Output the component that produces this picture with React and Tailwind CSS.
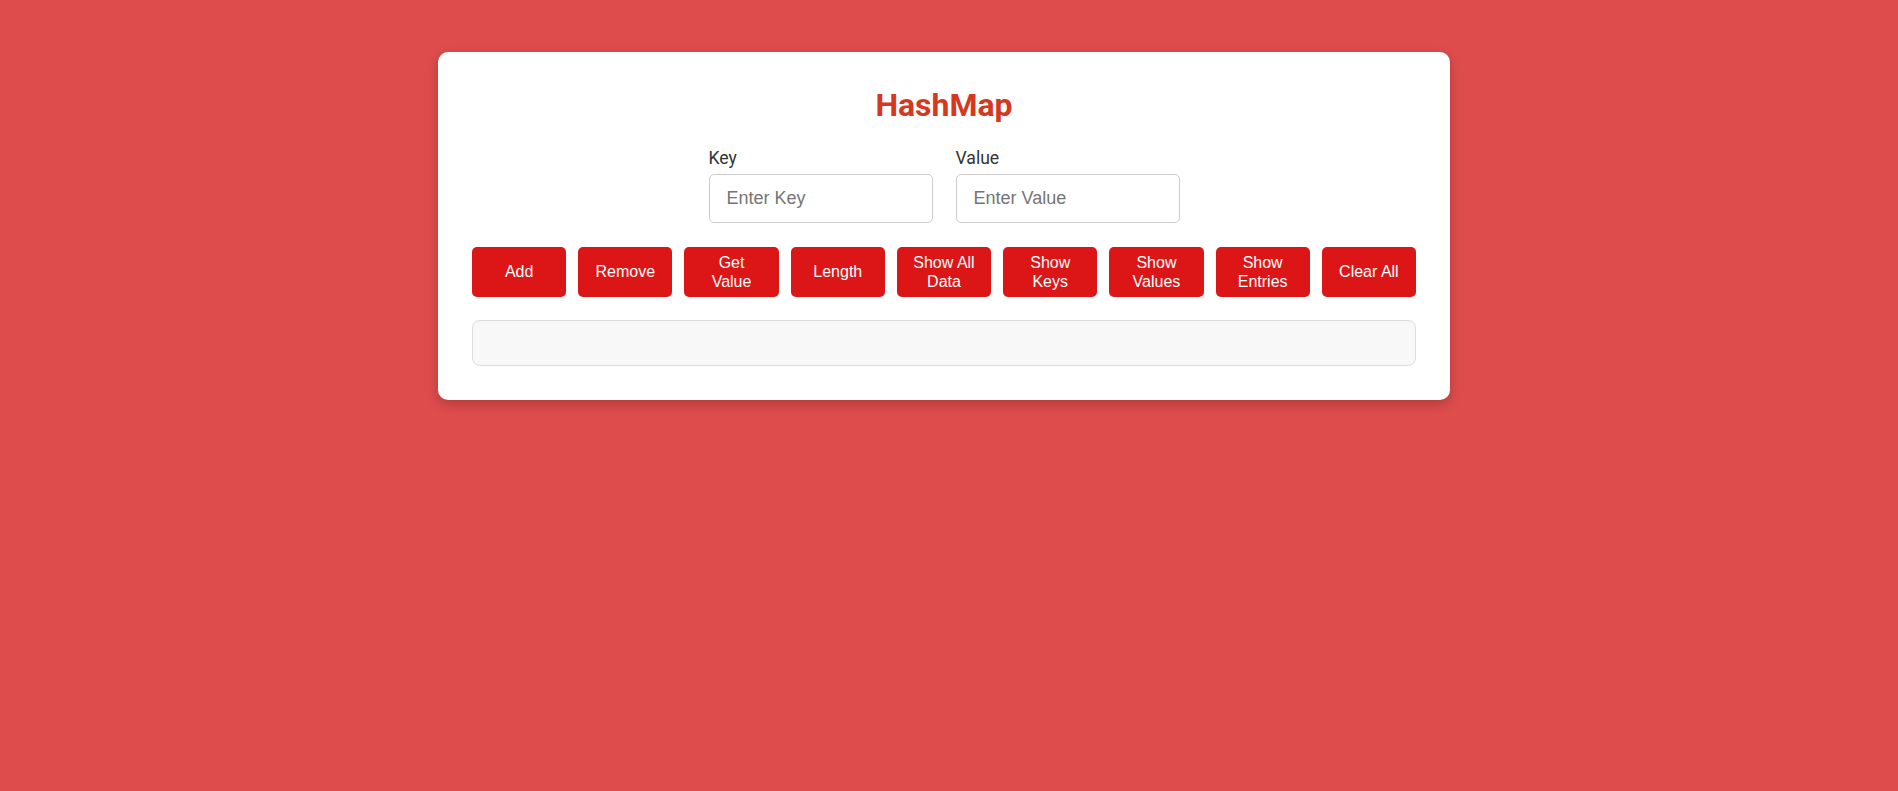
// App.jsx
const buttons = [
  "Add",
  "Remove",
  "Get Value",
  "Length",
  "Show All Data",
  "Show Keys",
  "Show Values",
  "Show Entries",
  "Clear All",
];

export default function App() {
  return (
    <div className="min-h-screen w-full bg-[#df4c4c] pt-[52px] pr-[10px] font-['Roboto',sans-serif]">
      {/* CARD */}
      <div className="mx-auto w-[1012px] bg-white rounded-[10px] shadow-[0_4px_12px_rgba(0,0,0,0.22)] px-[34px] pt-[35px] pb-[34px]">
        <h1 className="text-center text-[32px] leading-[37px] font-bold text-[#d5381f] mb-[24px]">HashMap</h1>

        {/* INPUTS */}
        <div className="flex justify-center gap-[23px]">
          <div className="flex flex-col">
            <label className="text-[17.6px] leading-[21px] text-[#333] mb-[5px]">Key</label>
            <input
              type="text"
              placeholder="Enter Key"
              className="w-[224px] h-[49px] border border-[#ccc] rounded-[5px] px-[17px] text-[18px] font-['Liberation_Sans',Arial,sans-serif] text-[#333] placeholder-[#757575] outline-none"
            />
          </div>
          <div className="flex flex-col">
            <label className="text-[17.6px] leading-[21px] text-[#333] mb-[5px]">Value</label>
            <input
              type="text"
              placeholder="Enter Value"
              className="w-[224px] h-[49px] border border-[#ccc] rounded-[5px] px-[17px] text-[18px] font-['Liberation_Sans',Arial,sans-serif] text-[#333] placeholder-[#757575] outline-none"
            />
          </div>
        </div>

        {/* BUTTONS */}
        <div className="grid grid-cols-9 gap-[12px] mt-[24px]">
          {buttons.map((b) => (
            <button
              key={b}
              className="bg-[#dc1616] text-white rounded-[5px] px-[14px] py-[5px] text-[16px] leading-[19.5px] font-['Liberation_Sans',Arial,sans-serif] min-h-[50px]"
            >
              {b}
            </button>
          ))}
        </div>

        {/* RESULT */}
        <div className="mt-[23px] h-[46px] bg-[#f8f8f8] border border-[#ddd] rounded-[8px]"></div>
      </div>
    </div>
  );
}
